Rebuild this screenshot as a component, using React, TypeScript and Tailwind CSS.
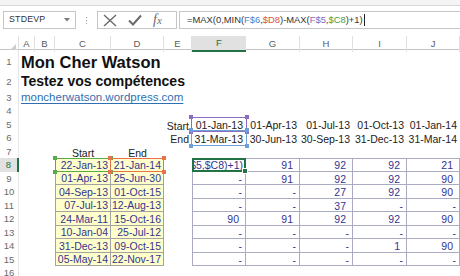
import React from "react";

const GRID = "grid grid-cols-[19px_16px_20px_56px_53px_28px_54px_54px_53px_54px_53px]";
const NARROW = "font-['Liberation_Sans_Narrow','Arial_Narrow',sans-serif]";
const NAVY = "text-[#35358f]";
const ROW = "h-[13.5px]";

type Val = string | null;

const dataRows: { start: string; end: string; vals: Val[] }[] = [
  { start: "22-Jan-13", end: "21-Jan-14", vals: [null, "91", "92", "92", "21"] },
  { start: "01-Apr-13", end: "25-Jun-30", vals: ["-", "91", "92", "92", "90"] },
  { start: "04-Sep-13", end: "01-Oct-15", vals: ["-", "-", "27", "92", "90"] },
  { start: "07-Jul-13", end: "12-Aug-13", vals: ["-", "-", "37", "-", "-"] },
  { start: "24-Mar-11", end: "15-Oct-16", vals: ["90", "91", "92", "92", "90"] },
  { start: "10-Jan-04", end: "25-Jul-12", vals: ["-", "-", "-", "-", "-"] },
  { start: "31-Dec-13", end: "09-Oct-15", vals: ["-", "-", "-", "1", "90"] },
  { start: "05-May-14", end: "22-Nov-17", vals: ["-", "-", "-", "-", "-"] },
];

const quarterStart = ["01-Jan-13", "01-Apr-13", "01-Jul-13", "01-Oct-13", "01-Jan-14"];
const quarterEnd = ["31-Mar-13", "30-Jun-13", "30-Sep-13", "31-Dec-13", "31-Mar-14"];

function RefBox({ border, square }: { border: string; square: string }) {
  return (
    <div className={`absolute -inset-px z-10 border-[1.5px] pointer-events-none ${border}`}>
      <span className={`absolute -left-[3px] -top-[3px] size-[4px] ${square}`} />
      <span className={`absolute -right-[3px] -top-[3px] size-[4px] ${square}`} />
      <span className={`absolute -left-[3px] -bottom-[3px] size-[4px] ${square}`} />
      <span className={`absolute -right-[3px] -bottom-[3px] size-[4px] ${square}`} />
    </div>
  );
}

function RowHead({ n, active }: { n: number; active?: boolean }) {
  return (
    <div
      className={`flex items-center justify-center text-[9.5px] leading-none ${
        active
          ? "bg-[#e1e1e1] text-[#217346] border-r-2 border-[#217346]"
          : "text-[#6a6a6a] border-r border-[#e6e6e6]"
      }`}
    >
      {n}
    </div>
  );
}

function Empty() {
  return <div />;
}

function FormulaBar() {
  return (
    <div>
      <div className="h-[6px] bg-[#f4f4f4] border-b border-[#d6d6d6]" />
      <div className="h-[30px] pt-[5px] flex items-start">
        <div className="ml-[3px] w-[73px] h-[18px] border border-[#c6c6c6] flex items-center justify-between pl-[5px] pr-[5px]">
          <span className="text-[8.8px] text-[#333] tracking-[0.2px]">STDEVP</span>
          <svg width="6" height="4" viewBox="0 0 6 4">
            <path d="M0 0 L6 0 L3 3.5 Z" fill="#7a7a7a" />
          </svg>
        </div>
        <div className="w-[21px] h-[18px] flex flex-col items-center justify-center gap-[2px]">
          <span className="size-[1px] bg-[#9a9a9a]" />
          <span className="size-[1px] bg-[#9a9a9a]" />
          <span className="size-[1px] bg-[#9a9a9a]" />
        </div>
        <div className="w-[80px] h-[18px] border border-[#c6c6c6] flex items-center pl-[5px] gap-[11px]">
          <svg width="14" height="13" viewBox="0 0 14 13">
            <path d="M1 1 L13 12 M13 1 L1 12" stroke="#6a6a6a" strokeWidth="1.4" fill="none" />
          </svg>
          <svg width="14" height="12" viewBox="0 0 14 12">
            <path d="M1 6.5 L5 10.5 L13 1.5" stroke="#6a6a6a" strokeWidth="2" fill="none" />
          </svg>
          <span className="font-['Liberation_Serif',serif] italic text-[14px] leading-none text-[#6a6a6a]">
            f<span className="text-[11px]">x</span>
          </span>
        </div>
        <div className="ml-[2px] flex-1 h-[18px] border-y border-l border-[#c6c6c6] flex items-center pl-[7px] text-[9.4px] text-[#333] whitespace-nowrap">
          <span>=MAX(0,MIN(</span>
          <span className="text-[#4a86c8]">F$6</span>
          <span>,</span>
          <span className="text-[#d8553a]">$D8</span>
          <span>)-MAX(</span>
          <span className="text-[#8a64b8]">F$5</span>
          <span>,</span>
          <span className="text-[#4f9a3a]">$C8</span>
          <span>)+1)</span>
          <span className="ml-[1px] w-px h-[12px] bg-[#222]" />
        </div>
      </div>
    </div>
  );
}

function ColumnHeaders() {
  const letters = ["A", "B", "C", "D", "E", "F", "G", "H", "I", "J"];
  return (
    <div className={`${GRID} h-[14px] border-b border-[#c4c4c4]`}>
      <div className="relative border-r border-[#e0e0e0]">
        <svg className="absolute right-[2px] bottom-[2px]" width="6" height="6" viewBox="0 0 6 6">
          <path d="M6 0 L6 6 L0 6 Z" fill="#cdcdcd" />
        </svg>
      </div>
      {letters.map((l) =>
        l === "F" ? (
          <div
            key={l}
            className="flex items-center justify-center text-[9.5px] bg-[#e1e1e1] text-[#217346] border-b-2 border-[#217346]"
          >
            {l}
          </div>
        ) : (
          <div key={l} className="flex items-center justify-center text-[9.5px] text-[#5a5a5a] border-r border-[#e0e0e0]">
            {l}
          </div>
        )
      )}
    </div>
  );
}

function DateCell({ text, ref: _r, box }: { text: string; ref?: never; box?: React.ReactNode }) {
  return (
    <div className="relative flex items-end justify-end pr-[3px]">
      <span className={`${NARROW} text-[10.5px] leading-none pb-[0.5px] whitespace-nowrap`}>{text}</span>
      {box}
    </div>
  );
}

function ValueCell({ v, first, top }: { v: Val; first: boolean; top: boolean }) {
  const edges = `${first ? "border-l" : ""} ${top ? "border-t" : ""}`;
  if (v === null) {
    return (
      <div className={`relative flex items-end justify-end pr-[2px] border-r border-b border-[#a9abc2] ${edges}`}>
        <div className="w-full overflow-hidden flex justify-end">
          <span className={`text-[10.5px] leading-none whitespace-nowrap ${NAVY}`}>F$5,$C8)+1)</span>
        </div>
        <div className="absolute -inset-px z-10 border-2 border-[#217346]">
          <span className="absolute -right-[4px] -bottom-[4px] size-[6px] bg-[#217346] border border-white" />
        </div>
      </div>
    );
  }
  return (
    <div
      className={`relative flex items-end justify-end border-r border-b border-[#a9abc2] ${edges} ${
        v === "-" ? "pr-[3px]" : "pr-[6px]"
      }`}
    >
      <span className={`text-[10.5px] leading-none ${NAVY}`}>{v}</span>
    </div>
  );
}

function Label({ text }: { text: string }) {
  return (
    <div className="flex items-end justify-end pr-[3px]">
      <span className="text-[10.5px] leading-none">{text}</span>
    </div>
  );
}

export default function App() {
  return (
    <div className="w-[460px] h-[276px] overflow-hidden bg-white font-['Liberation_Sans',Arial,sans-serif] text-[#222]">
      <FormulaBar />
      <ColumnHeaders />

      <div className={`${GRID} h-[23px]`}>
        <RowHead n={1} />
        <div className="col-span-10 flex items-end pl-[2px] pb-[3px]">
          <span className="text-[16.5px] font-bold leading-none whitespace-nowrap text-[#111]">Mon Cher Watson</span>
        </div>
      </div>
      <div className={`${GRID} h-[18px]`}>
        <RowHead n={2} />
        <div className="col-span-10 flex items-end pl-[2px] pb-[3px]">
          <span className="text-[14px] font-bold leading-none whitespace-nowrap text-[#111]">Testez vos compétences</span>
        </div>
      </div>
      <div className={`${GRID} h-[13px]`}>
        <RowHead n={3} />
        <div className="col-span-10 flex items-end pl-[2px] pb-[0.5px]">
          <span className="text-[11.5px] leading-none whitespace-nowrap text-[#2f6fb3] underline underline-offset-[1.5px]">
            moncherwatson.wordpress.com
          </span>
        </div>
      </div>
      <div className={`${GRID} ${ROW}`}>
        <RowHead n={4} />
      </div>

      <div className={`${GRID} ${ROW}`}>
        <RowHead n={5} />
        <Empty />
        <Empty />
        <Empty />
        <Empty />
        <Label text="Start" />
        {quarterStart.map((d, i) => (
          <DateCell
            key={d}
            text={d}
            box={i === 0 ? <RefBox border="border-[#8a6cc2]" square="bg-[#8a6cc2]" /> : null}
          />
        ))}
      </div>

      <div className={`${GRID} ${ROW}`}>
        <RowHead n={6} />
        <Empty />
        <Empty />
        <Empty />
        <Empty />
        <Label text="End" />
        {quarterEnd.map((d, i) => (
          <DateCell
            key={d}
            text={d}
            box={i === 0 ? <RefBox border="border-[#6e9fd6]" square="bg-[#6e9fd6]" /> : null}
          />
        ))}
      </div>

      <div className={`${GRID} ${ROW}`}>
        <RowHead n={7} />
        <Empty />
        <Empty />
        <div className="flex items-end justify-center">
          <span className="text-[10.5px] leading-none">Start</span>
        </div>
        <div className="flex items-end justify-center">
          <span className="text-[10.5px] leading-none">End</span>
        </div>
      </div>

      {dataRows.map((r, i) => (
        <div key={r.start} className={`${GRID} ${ROW}`}>
          <RowHead n={8 + i} active={i === 0} />
          <Empty />
          <Empty />
          <div
            className={`relative flex items-end justify-end pr-[2px] bg-[#ffffcc] border-l border-r border-b border-[#a3a3a3] ${
              i === 0 ? "border-t" : ""
            }`}
          >
            <span className={`${NARROW} text-[10.5px] leading-none pb-[0.5px] ${NAVY}`}>{r.start}</span>
            {i === 0 && <RefBox border="border-[#5aaa48]" square="bg-[#5aaa48]" />}
          </div>
          <div
            className={`relative flex items-end justify-end pr-[2px] bg-[#ffffcc] border-r border-b border-[#a3a3a3] ${
              i === 0 ? "border-t" : ""
            }`}
          >
            <span className={`${NARROW} text-[10.5px] leading-none pb-[0.5px] ${NAVY}`}>{r.end}</span>
            {i === 0 && <RefBox border="border-[#e8724c]" square="bg-[#e8724c]" />}
          </div>
          <Empty />
          {r.vals.map((v, j) => (
            <ValueCell key={j} v={v} first={j === 0} top={i === 0} />
          ))}
        </div>
      ))}

      <div className={`${GRID} ${ROW}`}>
        <RowHead n={16} />
      </div>
    </div>
  );
}
